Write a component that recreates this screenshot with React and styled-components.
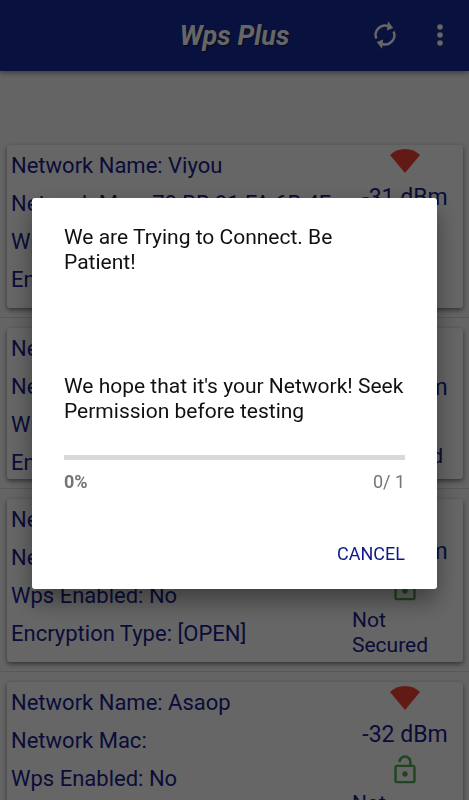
import React from "react";
import styled, { createGlobalStyle } from "styled-components";

const GlobalStyle = createGlobalStyle`
  * { box-sizing: border-box; }
  body {
    margin: 0;
    overflow: hidden;
    background: #fafafa;
    font-family: Roboto, "Noto Sans", sans-serif;
  }
  h1, h2, p, ul { margin: 0; padding: 0; }
`;

const Page = styled.div`
  height: 100vh;
  display: flex;
  flex-direction: column;
`;

const AppBar = styled.header`
  flex: none;
  height: 71px;
  padding: 0 20px;
  display: grid;
  grid-template-columns: 1fr auto 1fr;
  align-items: center;
  background: #182d9c;
  color: #fff;
  box-shadow: 0 2px 5px rgba(0, 0, 0, 0.4);
`;

const Title = styled.h1`
  grid-column: 2;
  font-size: 27px;
  line-height: 32px;
  font-style: italic;
  font-weight: 700;
  text-shadow: 1px 1px 1px rgba(0, 0, 0, 0.5);
`;

const Actions = styled.div`
  display: flex;
  justify-content: flex-end;
  align-items: center;
  gap: 32px;
  padding-bottom: 2px;
`;

const IconButton = styled.button`
  display: flex;
  padding: 0;
  border: 0;
  background: none;
  color: inherit;
`;

const List = styled.ul`
  flex: 1;
  min-height: 0;
  overflow: hidden;
  padding-top: 64px;
  list-style: none;
`;

const Item = styled.li`
  padding: 10px 6px 9px 7px;
  border-bottom: 1px solid #dedede;
`;

const Card = styled.article`
  display: flex;
  align-items: center;
  padding: 0 5px 0 4px;
  border-radius: 3px;
  background: #fff;
  box-shadow: 0 2px 5px rgba(0, 0, 0, 0.5);
  color: #1a2290;
`;

const Details = styled.div`
  flex: 1;
  align-self: flex-start;
  display: grid;
  gap: 12px;
  padding: 8px 0 3px;
  font-size: 22px;
  line-height: 26px;
  white-space: nowrap;
`;

const Status = styled.div`
  flex: none;
  width: 106px;
  display: flex;
  flex-direction: column;
  align-items: center;
  padding: 4px 0;
`;

const Level = styled.p`
  margin: 12px 0 6px;
  font-size: 23px;
  line-height: 26px;
`;

const Security = styled.p`
  margin-top: 5px;
  font-size: 21px;
  line-height: 25px;
`;

const Scrim = styled.div`
  position: fixed;
  inset: 0;
  display: flex;
  align-items: center;
  padding: 0 32px 13px;
  background: rgba(0, 0, 0, 0.6);
`;

const Dialog = styled.section`
  flex: 1;
  padding: 27px 32px 19px;
  border-radius: 3px;
  background: #fff;
  color: #111;
  font-size: 21px;
  line-height: 25px;
  box-shadow: 0 12px 24px rgba(0, 0, 0, 0.4);
`;

const DialogTitle = styled.h2`
  font-size: inherit;
  font-weight: 400;
`;

const Message = styled.p`
  margin-top: 99px;
`;

const Progress = styled.div`
  height: 5px;
  margin-top: 31px;
  background: #d9d9d9;
`;

const Counts = styled.div`
  display: flex;
  justify-content: space-between;
  margin-top: 10px;
  font-size: 18px;
  line-height: 24px;
  color: #757575;
`;

const Footer = styled.div`
  display: flex;
  justify-content: flex-end;
  margin-top: 44px;
`;

const TextButton = styled.button`
  padding: 4px 0;
  border: 0;
  background: none;
  color: #0d1a8c;
  font: inherit;
  font-size: 18px;
  line-height: 24px;
`;

const SyncIcon = () => (
  <svg width="28" height="30" viewBox="0 0 28 30" fill="none" stroke="currentColor" strokeWidth="2.5">
    <path d="M5.4 18.6A9.4 9.4 0 0 1 17 6M22.6 11.4A9.4 9.4 0 0 1 11 24" />
    <path d="M17 1.2L22.2 8L15.8 10.6ZM11 28.8L5.8 22L12.2 19.4Z" fill="currentColor" stroke="none" />
  </svg>
);

const MoreIcon = () => (
  <svg width="18" height="24" viewBox="0 0 18 24" fill="currentColor">
    <circle cx="9" cy="4" r="2.8" />
    <circle cx="9" cy="12" r="2.8" />
    <circle cx="9" cy="20" r="2.8" />
  </svg>
);

const WifiIcon = () => (
  <svg width="30" height="24" viewBox="0 0 30 24" fill="#f44336" aria-hidden="true">
    <path d="M0 6Q6 0 15 0Q24 0 30 6L15 24Z" />
  </svg>
);

const LockIcon = () => (
  <svg width="32" height="32" viewBox="0 0 24 24" fill="#4caf50" aria-hidden="true">
    <path d="M18 8h-1V6c0-2.76-2.24-5-5-5S7 3.24 7 6h1.9c0-1.71 1.39-3.1 3.1-3.1 1.71 0 3.1 1.39 3.1 3.1v2H6c-1.1 0-2 .9-2 2v10c0 1.1.9 2 2 2h12c1.1 0 2-.9 2-2V10c0-1.1-.9-2-2-2zm.2 12.2H5.8V9.8h12.4v10.4z" />
    <circle cx="12" cy="15" r="2" />
  </svg>
);

const networks = [
  { name: "Viyou", mac: "70:BB:91:FA:6B:4F", wps: "No", type: "[OPEN]", level: "-31 dBm", security: "Not Secured" },
  { name: "Home", mac: "", wps: "Yes", type: "[WPA2]", level: "-31 dBm", security: "Secured" },
  { name: "Guest", mac: "", wps: "No", type: "[OPEN]", level: "-32 dBm", security: "Not Secured" },
  { name: "Asaop", mac: "", wps: "No", type: "[OPEN]", level: "-32 dBm", security: "Not Secured" },
];

const NetworkCard = ({ network }) => (
  <Item>
    <Card>
      <Details>
        <p>Network Name: {network.name}</p>
        <p>Network Mac: {network.mac}</p>
        <p>Wps Enabled: {network.wps}</p>
        <p>Encryption Type: {network.type}</p>
      </Details>
      <Status>
        <WifiIcon />
        <Level>{network.level}</Level>
        <LockIcon />
        <Security>{network.security}</Security>
      </Status>
    </Card>
  </Item>
);

export default function App() {
  return (
    <>
      <GlobalStyle />
      <Page>
        <AppBar>
          <Title>Wps Plus</Title>
          <Actions>
            <IconButton aria-label="Refresh"><SyncIcon /></IconButton>
            <IconButton aria-label="More options"><MoreIcon /></IconButton>
          </Actions>
        </AppBar>
        <List>
          {networks.map((network) => (
            <NetworkCard key={network.name} network={network} />
          ))}
        </List>
      </Page>
      <Scrim>
        <Dialog role="dialog" aria-modal="true" aria-labelledby="connect-title">
          <DialogTitle id="connect-title">We are Trying to Connect. Be Patient!</DialogTitle>
          <Message>We hope that it's your Network! Seek Permission before testing</Message>
          <Progress role="progressbar" aria-label="Connecting" aria-valuemin={0} aria-valuemax={1} aria-valuenow={0} />
          <Counts>
            <strong>0%</strong>
            <span>0/ 1</span>
          </Counts>
          <Footer>
            <TextButton>CANCEL</TextButton>
          </Footer>
        </Dialog>
      </Scrim>
    </>
  );
}
